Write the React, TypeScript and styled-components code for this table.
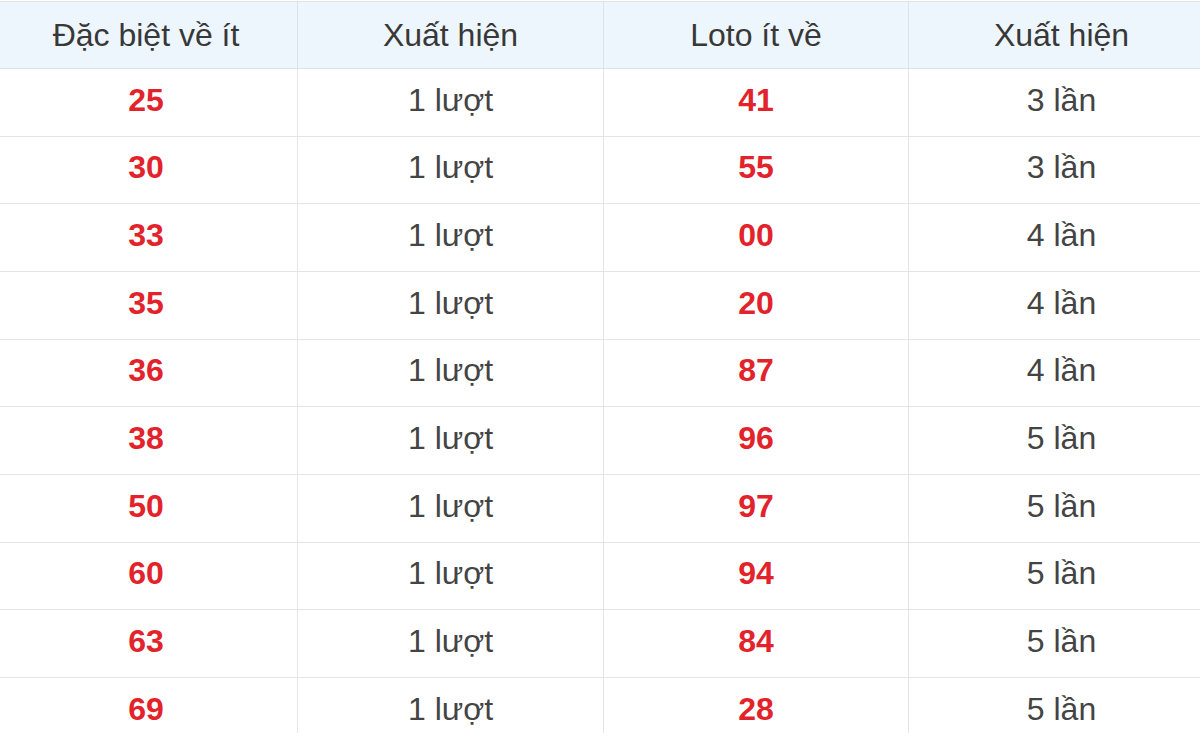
import React from 'react'
import styled, { createGlobalStyle } from 'styled-components'

const GlobalStyle = createGlobalStyle`
    html, body {
        margin: 0;
        padding: 0;
        background: #ffffff;
    }
    body {
        font-family: 'Liberation Sans', Arial, sans-serif;
    }
`

const rows = [
    ['25', '1 lượt', '41', '3 lần'],
    ['30', '1 lượt', '55', '3 lần'],
    ['33', '1 lượt', '00', '4 lần'],
    ['35', '1 lượt', '20', '4 lần'],
    ['36', '1 lượt', '87', '4 lần'],
    ['38', '1 lượt', '96', '5 lần'],
    ['50', '1 lượt', '97', '5 lần'],
    ['60', '1 lượt', '94', '5 lần'],
    ['63', '1 lượt', '84', '5 lần'],
    ['69', '1 lượt', '28', '5 lần'],
]

const headers = ['Đặc biệt về ít', 'Xuất hiện', 'Loto ít về', 'Xuất hiện']

const App: React.FC = () => {
    return (
        <>
            <GlobalStyle />
            <Viewport>
                <Table>
                    <HeadRow>
                        {headers.map((h, i) => (
                            <HeadCell key={i} $first={i === 0}>
                                {h}
                            </HeadCell>
                        ))}
                    </HeadRow>
                    {rows.map((r, i) => (
                        <Row key={i}>
                            <Cell $first $red>
                                {r[0]}
                            </Cell>
                            <Cell>{r[1]}</Cell>
                            <Cell $red>{r[2]}</Cell>
                            <Cell>{r[3]}</Cell>
                        </Row>
                    ))}
                </Table>
            </Viewport>
        </>
    )
}

const Viewport = styled.div`
    width: 1200px;
    height: 733px;
    overflow: hidden;
    padding-top: 1px;
    box-sizing: border-box;
`

const Table = styled.div`
    width: 1219px;
    margin-left: -5px;
    border-top: 1px solid #dfe4ea;
`

const columns = '302px 306px 305px 306px'

const HeadRow = styled.div`
    display: grid;
    grid-template-columns: ${columns};
    height: 66px;
    background: #eef6fd;
    border-bottom: 1px solid #dde2e8;
`

const Row = styled.div`
    display: grid;
    grid-template-columns: ${columns};
    height: 66.67px;
    border-bottom: 1px solid #e2e5e9;
`

const HeadCell = styled.div<{ $first?: boolean }>`
    display: flex;
    align-items: center;
    justify-content: center;
    font-size: 32px;
    color: #383838;
    border-left: ${(p) => (p.$first ? 'none' : '1px solid #dde2e8')};
`

const Cell = styled.div<{ $first?: boolean; $red?: boolean }>`
    display: flex;
    align-items: center;
    justify-content: center;
    padding-bottom: 4px;
    font-size: 32px;
    font-weight: ${(p) => (p.$red ? 700 : 400)};
    color: ${(p) => (p.$red ? '#e3232c' : '#444444')};
    border-left: ${(p) => (p.$first ? 'none' : '1px solid #e2e5e9')};
`

export default App
